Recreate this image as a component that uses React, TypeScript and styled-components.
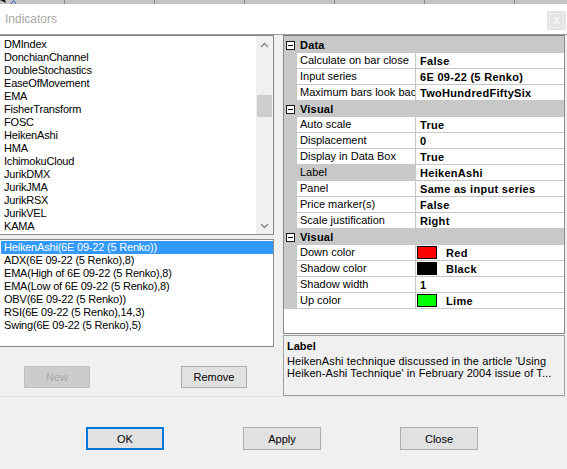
import React from "react";
import styled, { createGlobalStyle, css } from "styled-components";

const GlobalStyle = createGlobalStyle`
  html, body {
    margin: 0;
    padding: 0;
    background: #f0f0f0;
  }
  body {
    font-family: "Liberation Sans", Arial, sans-serif;
    font-size: 11px;
    color: #000;
  }
`;

const Screen = styled.div`
  position: relative;
  width: 567px;
  height: 469px;
  display: flex;
  flex-direction: column;
  overflow: hidden;
  background: #f0f0f0;
`;

// chart behind the dialog peeks out at the top and bottom
const ChartStrip = styled.div<{ $h: number }>`
  position: relative;
  flex: none;
  height: ${(p) => p.$h}px;
  background-color: #c4c4c4;
  background-image: linear-gradient(90deg, #8d8d8d 1px, transparent 1px);
  background-size: 90px 100%;
  background-position: 64px 0;
`;

const ChartMark = styled.svg`
  position: absolute;
  left: 0;
  top: 0;
`;

const TitleBar = styled.div`
  flex: none;
  height: 30px;
  display: flex;
  align-items: center;
  justify-content: space-between;
  background: #fff;
  border-bottom: 1px solid #9a9a9a;
  padding-left: 5px;
`;

const Title = styled.span`
  font-size: 12px;
  color: #a8a8a8;
`;

const CloseBox = styled.div`
  align-self: flex-start;
  margin-top: 7px;
  margin-right: 1px;
  width: 19px;
  height: 19px;
  box-sizing: border-box;
  background: #e4e4e4;
  outline: 1px dotted #fafafa;
  outline-offset: -3px;
  color: #fdfdfd;
  font-size: 12px;
  line-height: 18px;
  text-align: center;
`;

const Main = styled.div`
  flex: none;
  height: 361px;
  display: flex;
  gap: 9px;
`;

const LeftColumn = styled.div`
  width: 274px;
  display: flex;
  flex-direction: column;
`;

const RightColumn = styled.div`
  width: 282px;
  display: flex;
  flex-direction: column;
  gap: 1px;
`;

const ListBox = styled.div<{ $h: number; $gap?: number }>`
  flex: none;
  height: ${(p) => p.$h}px;
  margin-top: ${(p) => p.$gap ?? 0}px;
  box-sizing: border-box;
  display: flex;
  background: #fff;
  border: 1px solid #8a8a8a;
  border-left: none;
  overflow: hidden;
`;

const ListItems = styled.div<{ $top: number }>`
  flex: 1;
  padding-top: ${(p) => p.$top}px;
  min-width: 0;
`;

const ListItem = styled.div<{ $selected?: boolean }>`
  height: 13px;
  line-height: 13px;
  padding-left: 3px;
  margin-left: 1px;
  white-space: nowrap;
  letter-spacing: -0.2px;
  background: ${(p) => (p.$selected ? "#3399ff" : "transparent")};
  color: ${(p) => (p.$selected ? "#fff" : "#000")};
`;

const ScrollBar = styled.div`
  flex: none;
  width: 17px;
  display: flex;
  flex-direction: column;
  background: #f0f0f0;
`;

const ScrollArrow = styled.div`
  flex: none;
  height: 17px;
  display: flex;
  align-items: center;
  justify-content: center;
`;

const ScrollTrack = styled.div`
  flex: 1;
`;

const ScrollThumb = styled.div`
  margin: 42px 1px 0;
  height: 22px;
  background: #cdcdcd;
`;

const ButtonRow = styled.div`
  display: flex;
  margin-top: 19px;
  padding-left: 24px;
  gap: 91px;
`;

type Variant = "normal" | "primary" | "disabled";

const buttonBase = css<{ $variant?: Variant }>`
  box-sizing: border-box;
  padding: 0;
  font-family: "Liberation Sans", Arial, sans-serif;
  font-size: 11px;
  background: ${(p) => (p.$variant === "disabled" ? "#cccccc" : "#e1e1e1")};
  color: ${(p) => (p.$variant === "disabled" ? "#a8a8a8" : "#000")};
  border: ${(p) =>
    p.$variant === "primary"
      ? "2px solid #0078d7"
      : p.$variant === "disabled"
      ? "1px solid #bfbfbf"
      : "1px solid #adadad"};
`;

const SmallButton = styled.button<{ $variant?: Variant }>`
  ${buttonBase};
  width: 66px;
  height: 22px;
`;

const DialogButton = styled.button<{ $variant?: Variant }>`
  ${buttonBase};
  width: 78px;
  height: 23px;
`;

const GridFrame = styled.div`
  flex: none;
  height: 299px;
  box-sizing: border-box;
  background: #fff;
  border: 1px solid #8a8a8a;
  border-top-color: #7a7a7a;
  overflow: hidden;
`;

const GridBody = styled.div`
  border-top: 1px solid #c8c8c8;
`;

const CategoryRow = styled.div`
  height: 16px;
  display: flex;
  align-items: center;
  background: #c8c8c8;
  font-weight: bold;
  letter-spacing: 0.2px;
`;

const Toggle = styled.span`
  position: relative;
  width: 9px;
  height: 9px;
  box-sizing: border-box;
  margin: 0 5px 0 2px;
  border: 1px solid #1a1a1a;
  background: #fff;

  &::after {
    content: "";
    position: absolute;
    left: 1px;
    right: 1px;
    top: 3px;
    height: 1px;
    background: #000;
  }
`;

const PropRow = styled.div`
  height: 16px;
  display: grid;
  grid-template-columns: 13px 119px 1fr;
`;

const PropMargin = styled.div`
  background: #c8c8c8;
`;

// the name column clips long names, like "Maximum bars look bac"
const PropName = styled.div<{ $selected?: boolean }>`
  box-sizing: border-box;
  padding-left: 3px;
  line-height: 15px;
  white-space: nowrap;
  overflow: hidden;
  border-right: 1px solid #c8c8c8;
  border-bottom: 1px solid #c8c8c8;
  background: ${(p) => (p.$selected ? "#c8c8c8" : "#fff")};
`;

const PropValue = styled.div`
  box-sizing: border-box;
  display: flex;
  align-items: center;
  padding-left: 4px;
  font-weight: bold;
  letter-spacing: 0.3px;
  white-space: nowrap;
  overflow: hidden;
  border-bottom: 1px solid #c8c8c8;
`;

const Swatch = styled.span<{ $color: string }>`
  width: 20px;
  height: 13px;
  box-sizing: border-box;
  margin: 0 9px 0 -3px;
  border: 1px solid #000;
  background: ${(p) => p.$color};
`;

const HelpBox = styled.div`
  flex: none;
  height: 61px;
  box-sizing: border-box;
  padding: 4px 3px 0;
  border: 1px solid #a0a0a0;
  background: #f0f0f0;
`;

const HelpTitle = styled.div`
  font-weight: bold;
  line-height: 13px;
  margin-bottom: 2px;
`;

const HelpLine = styled.div`
  line-height: 12px;
  white-space: nowrap;
  letter-spacing: 0.1px;
`;

const Footer = styled.div`
  position: relative;
  flex: none;
  height: 65px;
  display: flex;
  align-items: flex-start;
  gap: 79px;
  padding: 30px 0 0 86px;
  box-sizing: content-box;
  border-top: 1px solid #e4e4e4;
`;

const Grip = styled.svg`
  position: absolute;
  right: 1px;
  bottom: 0;
`;

const BlueDot = styled.span`
  position: absolute;
  left: 13px;
  top: 3px;
  width: 3px;
  height: 3px;
  background: #2a2ae0;
`;

const indicatorNames = [
  "DMIndex",
  "DonchianChannel",
  "DoubleStochastics",
  "EaseOfMovement",
  "EMA",
  "FisherTransform",
  "FOSC",
  "HeikenAshi",
  "HMA",
  "IchimokuCloud",
  "JurikDMX",
  "JurikJMA",
  "JurikRSX",
  "JurikVEL",
  "KAMA",
];

const applied = [
  "HeikenAshi(6E 09-22 (5 Renko))",
  "ADX(6E 09-22 (5 Renko),8)",
  "EMA(High of 6E 09-22 (5 Renko),8)",
  "EMA(Low of 6E 09-22 (5 Renko),8)",
  "OBV(6E 09-22 (5 Renko))",
  "RSI(6E 09-22 (5 Renko),14,3)",
  "Swing(6E 09-22 (5 Renko),5)",
];

type Prop = { name: string; value: string; swatch?: string; selected?: boolean };
type Group = { title: string; props: Prop[] };

const groups: Group[] = [
  {
    title: "Data",
    props: [
      { name: "Calculate on bar close", value: "False" },
      { name: "Input series", value: "6E 09-22 (5 Renko)" },
      { name: "Maximum bars look back", value: "TwoHundredFiftySix" },
    ],
  },
  {
    title: "Visual",
    props: [
      { name: "Auto scale", value: "True" },
      { name: "Displacement", value: "0" },
      { name: "Display in Data Box", value: "True" },
      { name: "Label", value: "HeikenAshi", selected: true },
      { name: "Panel", value: "Same as input series" },
      { name: "Price marker(s)", value: "False" },
      { name: "Scale justification", value: "Right" },
    ],
  },
  {
    title: "Visual",
    props: [
      { name: "Down color", value: "Red", swatch: "#ff0000" },
      { name: "Shadow color", value: "Black", swatch: "#000000" },
      { name: "Shadow width", value: "1" },
      { name: "Up color", value: "Lime", swatch: "#00ff00" },
    ],
  },
];

const Chevron = ({ up }: { up?: boolean }) => (
  <svg width="9" height="6" viewBox="0 0 9 6">
    <path
      d={up ? "M1 5 L4.5 1.5 L8 5" : "M1 1 L4.5 4.5 L8 1"}
      fill="none"
      stroke="#858585"
      strokeWidth="1.4"
    />
  </svg>
);

const App = () => {
  return (
    <Screen>
      <GlobalStyle />
      <ChartStrip $h={4}>
        <ChartMark width="18" height="4" viewBox="0 0 18 4">
          <path d="M0 0 L5 0 L6 3 L2 1 Z" fill="#111" />
          <path d="M11 4 L13.5 0.5 L16 4" fill="none" stroke="#2f5fd0" strokeWidth="1" />
        </ChartMark>
      </ChartStrip>

      <TitleBar>
        <Title>Indicators</Title>
        <CloseBox>x</CloseBox>
      </TitleBar>

      <Main>
        <LeftColumn>
          <ListBox $h={200}>
            <ListItems $top={2}>
              {indicatorNames.map((n) => (
                <ListItem key={n}>{n}</ListItem>
              ))}
            </ListItems>
            <ScrollBar>
              <ScrollArrow>
                <Chevron up />
              </ScrollArrow>
              <ScrollTrack>
                <ScrollThumb />
              </ScrollTrack>
              <ScrollArrow>
                <Chevron />
              </ScrollArrow>
            </ScrollBar>
          </ListBox>

          <ListBox $h={108} $gap={4}>
            <ListItems $top={1}>
              {applied.map((n, i) => (
                <ListItem key={n} $selected={i === 0}>
                  {n}
                </ListItem>
              ))}
            </ListItems>
          </ListBox>

          <ButtonRow>
            <SmallButton $variant="disabled">New</SmallButton>
            <SmallButton>Remove</SmallButton>
          </ButtonRow>
        </LeftColumn>

        <RightColumn>
          <GridFrame>
            <GridBody>
              {groups.map((g, gi) => (
                <React.Fragment key={gi}>
                  <CategoryRow>
                    <Toggle />
                    {g.title}
                  </CategoryRow>
                  {g.props.map((p) => (
                    <PropRow key={p.name}>
                      <PropMargin />
                      <PropName $selected={p.selected}>{p.name}</PropName>
                      <PropValue>
                        {p.swatch && <Swatch $color={p.swatch} />}
                        {p.value}
                      </PropValue>
                    </PropRow>
                  ))}
                </React.Fragment>
              ))}
            </GridBody>
          </GridFrame>

          <HelpBox>
            <HelpTitle>Label</HelpTitle>
            <HelpLine>HeikenAshi technique discussed in the article 'Using</HelpLine>
            <HelpLine>Heiken-Ashi Technique' in February 2004 issue of T...</HelpLine>
          </HelpBox>
        </RightColumn>
      </Main>

      <Footer>
        <DialogButton $variant="primary">OK</DialogButton>
        <DialogButton>Apply</DialogButton>
        <DialogButton>Close</DialogButton>
        <Grip width="10" height="10" viewBox="0 0 10 10">
          {[
            [8, 0],
            [8, 4],
            [4, 4],
            [8, 8],
            [4, 8],
            [0, 8],
          ].map(([x, y]) => (
            <rect key={`${x}-${y}`} x={x} y={y} width="2" height="2" fill="#bdbdbd" />
          ))}
        </Grip>
      </Footer>

      <ChartStrip $h={7}>
        <BlueDot />
      </ChartStrip>
    </Screen>
  );
};

export default App;
